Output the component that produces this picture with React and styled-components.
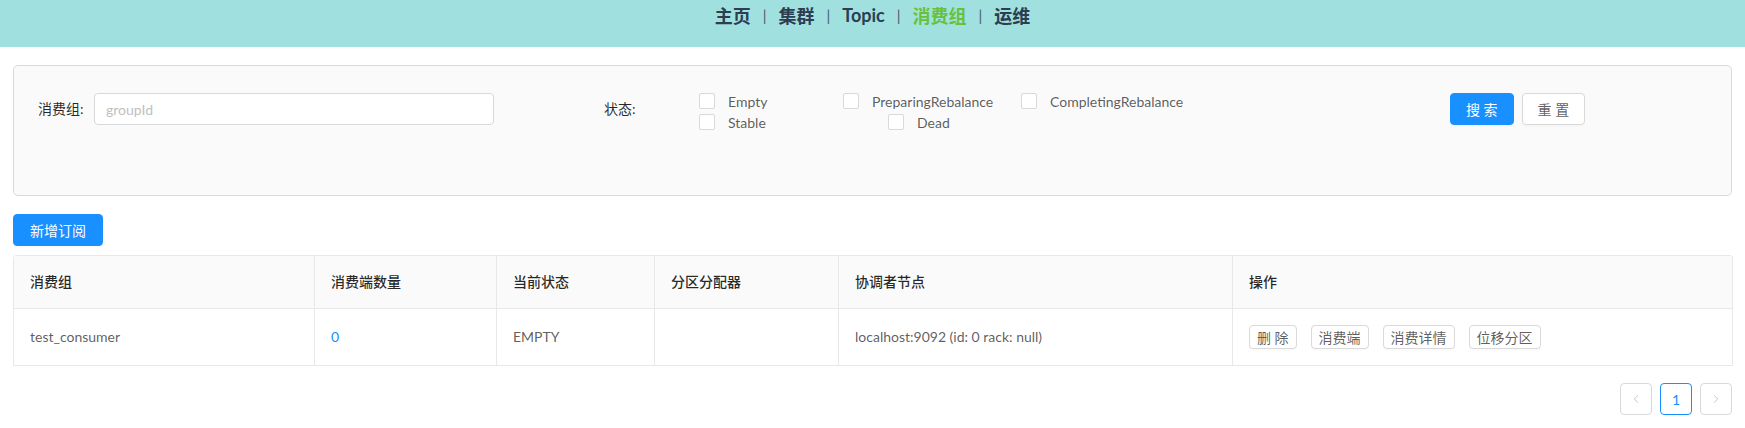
import React, { useState } from 'react'
import styled, { createGlobalStyle } from 'styled-components'
import { ChevronLeft, ChevronRight } from 'lucide-react'

const GlobalStyle = createGlobalStyle`
  body {
    margin: 0;
    background: #fff;
    font-family: Lato, "Noto Sans CJK SC", sans-serif;
    font-size: 14px;
    color: rgba(0, 0, 0, 0.65);
  }
  * { box-sizing: border-box; }
`

const Header = styled.header`
  height: 47px;
  background: #a0e1e0;
  display: flex;
  justify-content: center;
`
const Nav = styled.nav`
  display: flex;
  align-items: center;
  height: 30px;
  font-size: 18px;
  font-weight: 700;
  color: #2c3e50;
`
const NavLink = styled.a`
  color: ${({ $active }) => ($active ? '#67c23a' : '#2c3e50')};
  text-decoration: none;
  cursor: pointer;
`
const Sep = styled.span`
  margin: 0 12px;
  font-size: 15px;
  font-weight: 400;
  color: #4a5a66;
`

const Page = styled.main`
  padding: 18px 13px 16px;
`
const Panel = styled.section`
  background: #fafafa;
  border: 1px solid #d9d9d9;
  border-radius: 5px;
  padding: 27px 24px 0;
  height: 131px;
`
const FilterRow = styled.div`
  display: grid;
  grid-template-columns: 566px 846px auto;
  align-items: start;
`
const Field = styled.div`
  display: flex;
  align-items: flex-start;
`
const Label = styled.label`
  flex: 0 0 ${({ $w }) => $w}px;
  line-height: 32px;
  color: rgba(0, 0, 0, 0.85);
  white-space: nowrap;
`
const Input = styled.input`
  width: 400px;
  height: 32px;
  padding: 4px 11px;
  border: 1px solid #d9d9d9;
  border-radius: 4px;
  font-family: inherit;
  font-size: 14px;
  color: rgba(0, 0, 0, 0.65);
  background: #fff;
  outline: none;
  &::placeholder { color: #bfbfbf; }
`
const CheckGroup = styled.div`
  display: flex;
  flex-direction: column;
  gap: 5px;
`
const CheckRow = styled.div`
  display: flex;
`
const CheckItem = styled.label`
  display: flex;
  align-items: center;
  height: 16px;
  width: ${({ $w }) => ($w ? `${$w}px` : 'auto')};
  cursor: pointer;
  white-space: nowrap;
`
const Box = styled.span`
  width: 16px;
  height: 16px;
  border: 1px solid #d9d9d9;
  border-radius: 2px;
  background: ${({ $on }) => ($on ? '#1890ff' : '#fff')};
  margin-right: 13px;
`
const Buttons = styled.div`
  display: flex;
  gap: 8px;
`
const Button = styled.button`
  height: ${({ $small }) => ($small ? 24 : 32)}px;
  padding: ${({ $small, $wide }) => ($small ? '0 7px' : $wide ? '0 16px' : '0 15px')};
  border-radius: 4px;
  font-family: inherit;
  font-size: 14px;
  cursor: pointer;
  border: 1px solid ${({ $primary }) => ($primary ? '#1890ff' : '#d9d9d9')};
  background: ${({ $primary }) => ($primary ? '#1890ff' : '#fff')};
  color: ${({ $primary }) => ($primary ? '#fff' : 'rgba(0, 0, 0, 0.65)')};
  box-shadow: 0 2px 0 rgba(0, 0, 0, 0.015);
`

const AddBar = styled.div`
  margin: 18px 0 9px;
`

const Table = styled.table`
  width: 100%;
  border-collapse: separate;
  border-spacing: 0;
  table-layout: fixed;
  border: 1px solid #e8e8e8;
  border-right: 0;
  border-bottom: 0;
  border-radius: 4px 4px 0 0;
`
const Col = styled.col`
  width: ${({ $w }) => $w}px;
`
const Th = styled.th`
  padding: 16px;
  line-height: 20px;
  text-align: left;
  font-weight: 500;
  color: rgba(0, 0, 0, 0.85);
  background: #fafafa;
  border-right: 1px solid #e8e8e8;
  border-bottom: 1px solid #e8e8e8;
`
const Td = styled.td`
  padding: 16px;
  line-height: 24px;
  vertical-align: middle;
  border-right: 1px solid #e8e8e8;
  border-bottom: 1px solid #e8e8e8;
  color: rgba(0, 0, 0, 0.65);
`
const Link = styled.a`
  color: #1890ff;
  cursor: pointer;
`
const Actions = styled.div`
  display: flex;
  gap: 14px;
`

const Pager = styled.div`
  display: flex;
  justify-content: flex-end;
  gap: 8px;
  margin-top: 17px;
`
const PageItem = styled.button`
  width: 32px;
  height: 32px;
  display: flex;
  align-items: center;
  justify-content: center;
  border-radius: 4px;
  background: #fff;
  font-family: inherit;
  font-size: 14px;
  border: 1px solid ${({ $active }) => ($active ? '#1890ff' : '#d9d9d9')};
  color: ${({ $active }) => ($active ? '#1890ff' : 'rgba(0, 0, 0, 0.25)')};
  cursor: ${({ $disabled }) => ($disabled ? 'not-allowed' : 'pointer')};
  padding: 0;
`

const navItems = ['主页', '集群', 'Topic', '消费组', '运维']
const columns = [
  { title: '消费组', w: 301 },
  { title: '消费端数量', w: 182 },
  { title: '当前状态', w: 158 },
  { title: '分区分配器', w: 184 },
  { title: '协调者节点', w: 394 },
  { title: '操作', w: 500 },
]

export default function App() {
  const [groupId, setGroupId] = useState('')
  const [states, setStates] = useState([])

  const toggle = (s) =>
    setStates(states.includes(s) ? states.filter((x) => x !== s) : [...states, s])

  const check = (s, w) => (
    <CheckItem $w={w} key={s} onClick={() => toggle(s)}>
      <Box $on={states.includes(s)} />
      {s}
    </CheckItem>
  )

  return (
    <>
      <GlobalStyle />
      <Header>
        <Nav>
          {navItems.map((n, i) => (
            <React.Fragment key={n}>
              {i > 0 && <Sep>|</Sep>}
              <NavLink $active={n === '消费组'}>{n}</NavLink>
            </React.Fragment>
          ))}
        </Nav>
      </Header>
      <Page>
        <Panel>
          <FilterRow>
            <Field>
              <Label $w={56}>消费组:</Label>
              <Input
                placeholder="groupId"
                value={groupId}
                onChange={(e) => setGroupId(e.target.value)}
              />
            </Field>
            <Field>
              <Label $w={95}>状态:</Label>
              <CheckGroup>
                <CheckRow>
                  {check('Empty', 144)}
                  {check('PreparingRebalance', 178)}
                  {check('CompletingRebalance')}
                </CheckRow>
                <CheckRow>
                  {check('Stable', 189)}
                  {check('Dead')}
                </CheckRow>
              </CheckGroup>
            </Field>
            <Buttons>
              <Button $primary>搜 索</Button>
              <Button>重 置</Button>
            </Buttons>
          </FilterRow>
        </Panel>
        <AddBar>
          <Button $primary $wide>新增订阅</Button>
        </AddBar>
        <Table>
          <colgroup>
            {columns.map((c) => (
              <Col key={c.title} $w={c.w} />
            ))}
          </colgroup>
          <thead>
            <tr>
              {columns.map((c) => (
                <Th key={c.title}>{c.title}</Th>
              ))}
            </tr>
          </thead>
          <tbody>
            <tr>
              <Td>test_consumer</Td>
              <Td>
                <Link>0</Link>
              </Td>
              <Td>EMPTY</Td>
              <Td></Td>
              <Td>localhost:9092 (id: 0 rack: null)</Td>
              <Td>
                <Actions>
                  <Button $small>删 除</Button>
                  <Button $small>消费端</Button>
                  <Button $small>消费详情</Button>
                  <Button $small>位移分区</Button>
                </Actions>
              </Td>
            </tr>
          </tbody>
        </Table>
        <Pager>
          <PageItem $disabled>
            <ChevronLeft size={14} strokeWidth={1.5} />
          </PageItem>
          <PageItem $active>1</PageItem>
          <PageItem $disabled>
            <ChevronRight size={14} strokeWidth={1.5} />
          </PageItem>
        </Pager>
      </Page>
    </>
  )
}
